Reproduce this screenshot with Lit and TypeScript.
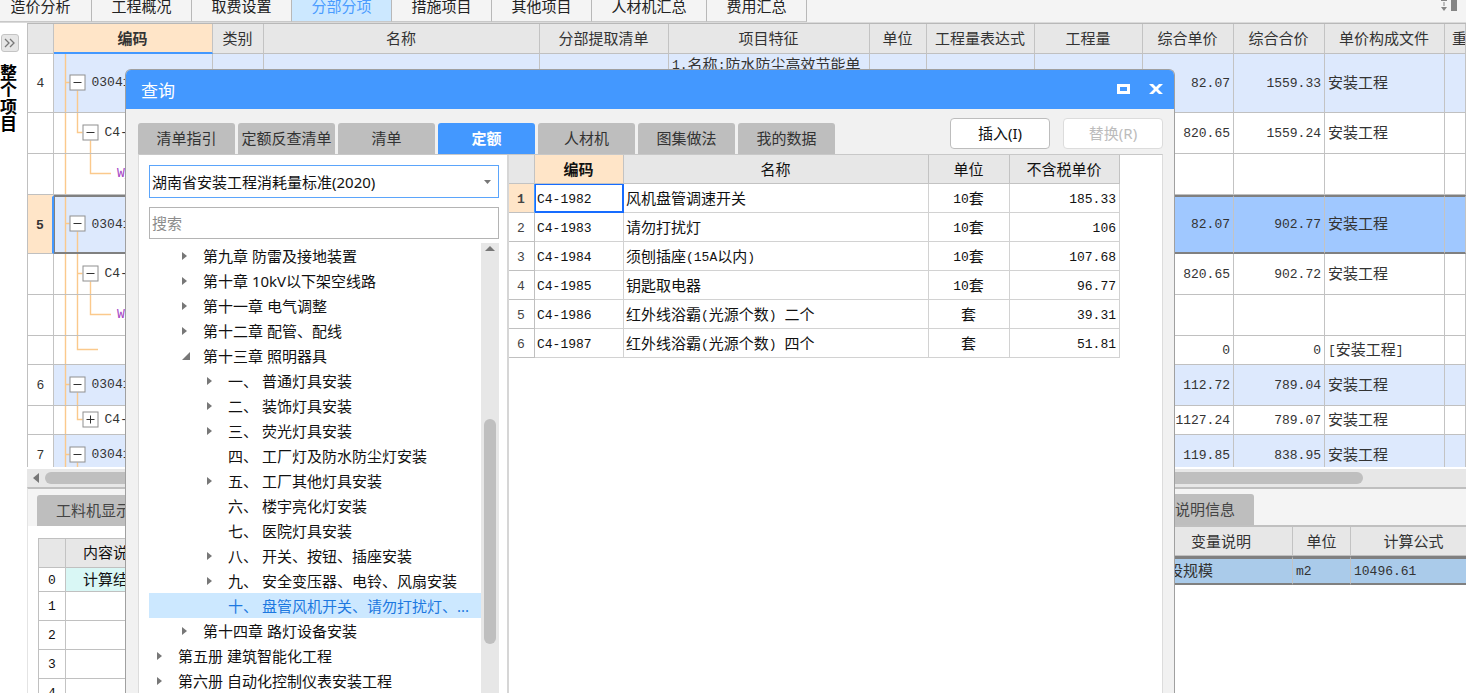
import { LitElement, html, css, svg, nothing } from "lit";
import { customElement } from "lit/decorators.js";
import { classMap } from "lit/directives/class-map.js";

/** Wraps half-width runs so that they keep the fixed pitch used in the grids. */
const mixed = (text: string) =>
  text
    .split(/([\x20-\x7e]+)/)
    .filter((part) => part)
    .map((part) => (/^[\x20-\x7e]/.test(part) ? html`<span class="half">${part}</span>` : part));

const shared = css`
  * {
    box-sizing: border-box;
  }
  button,
  input,
  select {
    font: inherit;
    color: inherit;
    margin: 0;
    padding: 0;
    border: 0;
    background: none;
    outline: none;
  }
  table {
    border-collapse: separate;
    border-spacing: 0;
    table-layout: fixed;
    font-family: "Noto Sans CJK SC", sans-serif;
    font-size: 15px;
    line-height: 20px;
    color: #333;
  }
  th,
  td {
    padding: 0 3px 2px;
    font-weight: 400;
    text-align: left;
    white-space: nowrap;
    overflow: hidden;
    border-right: 1px solid #c3c3c3;
    border-bottom: 1px solid #c0c0c0;
  }
  thead th {
    background: #e7e7e7;
    text-align: center;
    padding: 0 0 1px;
  }
  .half {
    font-family: "Liberation Mono", monospace;
    font-size: 13px;
    line-height: 16px;
    vertical-align: 1px;
    white-space: pre;
  }
  .num {
    text-align: right;
  }
  .mid {
    text-align: center;
  }
  th.active {
    background: #ffe5c8;
    font-weight: 700;
  }
`;

type Node = { level: number; box?: "-" | "+"; pass?: boolean; down?: boolean; tail?: boolean };
type Row = {
  n?: string;
  h: number;
  node: Node;
  code: string;
  feature?: string;
  price?: string;
  total?: string;
  file?: string;
  selected?: boolean;
};

const ROWS: Row[] = [
  { n: "4", h: 59, node: { level: 0, box: "-", down: true }, code: "030412", feature: "1.名称:防水防尘高效节能单", price: "82.07", total: "1559.33", file: "安装工程" },
  { h: 41, node: { level: 1, box: "-", down: true }, code: "C4-1", price: "820.65", total: "1559.24", file: "安装工程" },
  { h: 41, node: { level: 2 }, code: "W_" },
  { n: "5", h: 59, node: { level: 0, box: "-", down: true }, code: "030412", price: "82.07", total: "902.77", file: "安装工程", selected: true },
  { h: 41, node: { level: 1, box: "-", down: true, pass: true }, code: "C4-1", price: "820.65", total: "902.72", file: "安装工程" },
  { h: 41, node: { level: 2, pass: true }, code: "W_" },
  { h: 29, node: { level: 1, tail: true }, code: "", price: "0", total: "0", file: "[安装工程]" },
  { n: "6", h: 41, node: { level: 0, box: "-", down: true }, code: "030412", price: "112.72", total: "789.04", file: "安装工程" },
  { h: 29, node: { level: 1, box: "+" }, code: "C4-1", price: "1127.24", total: "789.07", file: "安装工程" },
  { n: "7", h: 41, node: { level: 0, box: "-", down: true }, code: "030412", price: "119.85", total: "838.95", file: "安装工程" },
];

@customElement("bill-grid")
class BillGrid extends LitElement {
  static styles = [
    shared,
    css`
      :host {
        display: block;
        overflow: hidden;
        border-top: 1px solid #b8b8b8;
        border-left: 1px solid #c0c0c0;
      }
      table {
        width: 100%;
      }
      .c-n { width: 26px; }
      .c-code { width: 159px; }
      .c-kind { width: 51px; }
      .c-pick { width: 129px; }
      .c-feature { width: 201px; }
      .c-unit { width: 57px; }
      .c-qty { width: 108px; }
      .c-price { width: 91px; }
      .c-file { width: 120px; }
      .c-last { width: 21px; }
      thead th {
        height: 30px;
        padding: 0 1px 2px 0;
      }
      thead th:last-child {
        padding-left: 7px;
        text-align: left;
      }
      th.active {
        padding-bottom: 0;
        border-bottom: 2px solid #4398ff;
      }
      td {
        padding-bottom: 3px;
      }
      .parent td {
        background: #dde9fd;
      }
      .no {
        text-align: center;
        padding: 0 0 3px;
      }
      .code {
        padding: 0;
      }
      .cell {
        display: flex;
        align-items: center;
        gap: 6px;
      }
      .twig {
        display: block;
        flex: none;
      }
      .twig svg,
      .cell > svg {
        display: block;
        flex: none;
      }
      .text {
        vertical-align: top;
      }
      .purple {
        color: #a33fc4;
      }
      .selected td {
        background: #a0c8ff;
      }
      .selected td,
      .selected th {
        border-top: 2px solid #808080;
        border-bottom: 2px solid #808080;
      }
      .selected .no {
        background: #ffe5c8;
        font-weight: 700;
        border-top-color: #ffe5c8;
        border-bottom: 1px solid #c0c0c0;
        border-right: 2px solid #4398ff;
      }
      .selected .code {
        background: #dde9fd;
        border-left: 1px solid #808080;
      }
    `,
  ];

  private twig(row: Row) {
    const h = row.h - (row.selected ? 4 : 1);
    const { level, box, pass, down, tail } = row.node;
    const m = Math.floor(h / 2) - 0.5;
    const shift = row.selected ? -1 : 0;
    const x = [11.5, 23.5, 36.5][level] + shift;
    const centre = x + 12 + (level === 0 ? 0 : 1);
    const end = box ? centre - 8 : level === 2 ? 57 : 44;
    const width = box ? centre + 8 : end;
    const lines = [`M${11.5 + shift} 0V${h}`];
    if (level === 0) lines.push(`M${x} ${m}H${end}`);
    else lines.push(`M${x} 0V${m}H${end}`);
    if (pass) lines.push(`M23.5 0V${h}`);
    if (down) lines.push(`M${centre} ${m + 8}V${h}`);
    if (tail) lines.push(`M23.5 0V${m}`);
    const art = html`<svg width=${width} height=${h} viewBox="0 0 ${width} ${h}" fill="none">
      <path d=${lines.join("")} stroke="#fbc98c" stroke-width="1.4" />
      ${box
        ? svg`<rect x=${centre - 7.5} y=${m - 7.5} width="15" height="15" fill="#fff" stroke="#909090" />
          <path d=${`M${centre - 4} ${m}h8${box === "+" ? `M${centre} ${m - 4}v8` : ""}`} stroke="#333" />`
        : nothing}
    </svg>`;
    return box
      ? html`<button class="twig" aria-label=${box === "+" ? "展开" : "折叠"}>${art}</button>`
      : art;
  }

  render() {
    return html`<table>
      <colgroup>
        <col class="c-n" /><col class="c-code" /><col class="c-kind" /><col /><col class="c-pick" />
        <col class="c-feature" /><col class="c-unit" /><col class="c-qty" /><col class="c-qty" />
        <col class="c-price" /><col class="c-price" /><col class="c-file" /><col class="c-last" />
      </colgroup>
      <thead>
        <tr>
          <th></th>
          <th class="active">编码</th>
          ${["类别", "名称", "分部提取清单", "项目特征", "单位", "工程量表达式", "工程量", "综合单价", "综合合价", "单价构成文件", "重"].map(
            (t) => html`<th>${t}</th>`,
          )}
        </tr>
      </thead>
      <tbody>
        ${ROWS.map(
          (r) => html`<tr class=${classMap({ parent: !!r.n, selected: !!r.selected })}>
            <th class="no"><span class="half">${r.n ?? ""}</span></th>
            <td class="code">
              <div class="cell">
                ${this.twig(r)}<span class=${classMap({ half: true, purple: r.node.level === 2 })}>${r.code}</span>
              </div>
            </td>
            <td></td>
            <td></td>
            <td></td>
            <td class="text">${mixed(r.feature ?? "")}</td>
            <td></td>
            <td></td>
            <td></td>
            <td class="num"><span class="half">${r.price ?? ""}</span></td>
            <td class="num"><span class="half">${r.total ?? ""}</span></td>
            <td>${mixed(r.file ?? "")}</td>
            <td></td>
          </tr>`,
        )}
      </tbody>
    </table>`;
  }
}

type Item = { level: 0 | 1 | 2; text: string; mark?: "closed" | "open"; chosen?: boolean };

const TREE: Item[] = [
  { level: 1, mark: "closed", text: "第九章 防雷及接地装置" },
  { level: 1, mark: "closed", text: "第十章 10kV以下架空线路" },
  { level: 1, mark: "closed", text: "第十一章 电气调整" },
  { level: 1, mark: "closed", text: "第十二章 配管、配线" },
  { level: 1, mark: "open", text: "第十三章 照明器具" },
  { level: 2, mark: "closed", text: "一、 普通灯具安装" },
  { level: 2, mark: "closed", text: "二、 装饰灯具安装" },
  { level: 2, mark: "closed", text: "三、 荧光灯具安装" },
  { level: 2, text: "四、 工厂灯及防水防尘灯安装" },
  { level: 2, mark: "closed", text: "五、 工厂其他灯具安装" },
  { level: 2, text: "六、 楼宇亮化灯安装" },
  { level: 2, text: "七、 医院灯具安装" },
  { level: 2, mark: "closed", text: "八、 开关、按钮、插座安装" },
  { level: 2, mark: "closed", text: "九、 安全变压器、电铃、风扇安装" },
  { level: 2, text: "十、 盘管风机开关、请勿打扰灯、...", chosen: true },
  { level: 1, mark: "closed", text: "第十四章 路灯设备安装" },
  { level: 0, mark: "closed", text: "第五册 建筑智能化工程" },
  { level: 0, mark: "closed", text: "第六册 自动化控制仪表安装工程" },
];

const QUOTAS = [
  ["C4-1982", "风机盘管调速开关", "10套", "185.33"],
  ["C4-1983", "请勿打扰灯", "10套", "106"],
  ["C4-1984", "须刨插座(15A以内)", "10套", "107.68"],
  ["C4-1985", "钥匙取电器", "10套", "96.77"],
  ["C4-1986", "红外线浴霸(光源个数) 二个", "套", "39.31"],
  ["C4-1987", "红外线浴霸(光源个数) 四个", "套", "51.81"],
];

@customElement("query-dialog")
class QueryDialog extends LitElement {
  static styles = [
    shared,
    css`
      :host {
        display: flex;
        flex-direction: column;
        background: #f1f1f1;
        border: 1px solid #a0a0a0;
        border-bottom: 0;
        border-radius: 6px 6px 0 0;
        overflow: hidden;
        color: #111;
        font-family: "Noto Sans", "Noto Sans CJK SC", sans-serif;
      }
      .title {
        display: flex;
        align-items: center;
        height: 39px;
        padding: 0 11px 1px 15px;
        background: #4398ff;
        color: #fff;
      }
      .title h2 {
        flex: 1;
        margin: 0;
        padding-top: 4px;
        font-size: 17px;
        line-height: 24px;
        font-weight: 400;
      }
      .title button {
        display: block;
        width: 14px;
        height: 10px;
        margin-left: 18px;
      }
      .title svg {
        display: block;
      }
      .bar {
        display: flex;
        justify-content: space-between;
        padding: 9px 11px 0 12px;
        height: 45px;
      }
      .tabs {
        display: flex;
        align-items: flex-end;
        gap: 3px;
      }
      .tabs button {
        width: 97px;
        height: 31px;
        padding-bottom: 1px;
        background: #bebebe;
        border-radius: 3px 3px 0 0;
        color: #333;
        white-space: nowrap;
      }
      .tabs .on {
        background: #4398ff;
        color: #fff;
        font-weight: 700;
      }
      .actions {
        display: flex;
        gap: 13px;
      }
      .actions button {
        width: 100px;
        height: 31px;
        padding-bottom: 1px;
        border: 1px solid #bdbdbd;
        border-radius: 4px;
        background: #fff;
      }
      .actions button:disabled {
        border-color: #dcdcdc;
        color: #bcbcbc;
      }
      .body {
        flex: 1;
        min-height: 0;
        display: flex;
        margin: 0 11px 0 12px;
        background: #fff;
        border: 1px solid #dcdcdc;
        border-top-color: #c8c8c8;
        border-bottom: 0;
      }
      .left {
        width: 370px;
        flex: none;
        display: flex;
        flex-direction: column;
        padding: 10px 8px 0 10px;
        border-right: 2px solid #d6d6d6;
      }
      .combo {
        display: flex;
        align-items: center;
        height: 33px;
        padding-right: 7px;
        border: 1px solid #5ba5fb;
      }
      .combo select {
        appearance: none;
        flex: 1;
        padding-left: 2px;
      }
      .search {
        height: 32px;
        margin-top: 9px;
        padding-left: 2px;
        border: 1px solid #b4b4b4;
        border-radius: 0;
      }
      .search::placeholder {
        color: #8c8c8c;
      }
      .scroll {
        flex: 1;
        min-height: 0;
        margin-top: 4px;
        display: flex;
      }
      ul {
        flex: 1;
        margin: 0;
        padding: 0;
        list-style: none;
        overflow: hidden;
      }
      li {
        display: flex;
        align-items: center;
        gap: 13px;
        height: 25px;
        padding-left: 8px;
        line-height: 20px;
        white-space: nowrap;
      }
      .l1 {
        padding-left: 33px;
      }
      .l2 {
        padding-left: 58px;
      }
      .chosen {
        background: #cce8ff;
        color: #1d78e0;
      }
      .track {
        width: 18px;
        background: #e7e7e7;
        display: flex;
        flex-direction: column;
        align-items: center;
        padding-top: 3px;
      }
      .thumb {
        width: 12px;
        height: 225px;
        margin-top: 168px;
        border-radius: 6px;
        background: #bfbfbf;
      }
      .right {
        flex: 1;
        min-width: 0;
        padding-right: 42px;
      }
      .quota {
        width: 100%;
        color: #111;
      }
      .quota th,
      .quota td {
        height: 29px;
        padding: 0 3px 1px 2px;
        border-color: #d2d2d2;
      }
      .quota thead th {
        padding-bottom: 0;
        border-color: #c3c3c3;
      }
      .quota .no {
        padding-bottom: 0;
        text-align: center;
        border-color: #c0c0c0;
        color: #444;
      }
      .quota .current {
        background: #ffe5c8;
        font-weight: 700;
        border-right: 1px solid #4398ff;
      }
      .quota .focus {
        padding: 0 0 0 1px;
        border: 2px solid #176cff;
        border-width: 1px 2px 2px 1px;
      }
      .q-n { width: 26px; }
      .q-code { width: 89px; }
      .q-unit { width: 81px; }
      .q-price { width: 110px; }
    `,
  ];

  render() {
    return html`
      <header class="title">
        <h2>查询</h2>
        <button aria-label="最大化">
          <svg width="14" height="10" viewBox="0 0 14 10"><path d="M0 0h13v10H0zM3 3v4h7V3z" fill="#fff" fill-rule="evenodd" /></svg>
        </button>
        <button aria-label="关闭">
          <svg width="14" height="10" viewBox="0 0 14 10"><path d="M0 0h4l3 3 3-3h4L9 5l5 5h-4L7 7l-3 3H0l5-5z" fill="#fff" /></svg>
        </button>
      </header>
      <div class="bar">
        <nav class="tabs">
          ${["清单指引", "定额反查清单", "清单", "定额", "人材机", "图集做法", "我的数据"].map(
            (t) => html`<button class=${classMap({ on: t === "定额" })}>${t}</button>`,
          )}
        </nav>
        <div class="actions"><button>插入(I)</button><button disabled>替换(R)</button></div>
      </div>
      <div class="body">
        <section class="left">
          <div class="combo">
            <select aria-label="定额库"><option>湖南省安装工程消耗量标准(2020)</option></select>
            <svg width="7" height="4" viewBox="0 0 7 4"><path d="M0 0h7L3.500 4z" fill="#777" /></svg>
          </div>
          <input class="search" type="text" placeholder="搜索" aria-label="搜索" />
          <div class="scroll">
            <ul>
              ${TREE.map(
                (i) => html`<li class=${classMap({ l1: i.level === 1, l2: i.level === 2, chosen: !!i.chosen })}>
                  <svg width="8" height="10" viewBox="0 0 8 10">
                    ${i.mark === "closed"
                      ? svg`<path d="M0 1v8l5-4z" fill="#777" />`
                      : i.mark === "open"
                        ? svg`<path d="M8 1v8H0z" fill="#777" />`
                        : nothing}
                  </svg>
                  <span>${i.text}</span>
                </li>`,
              )}
            </ul>
            <div class="track">
              <svg width="10" height="5" viewBox="0 0 10 5"><path d="M0 5h10L5 0z" fill="#777" /></svg>
              <div class="thumb"></div>
            </div>
          </div>
        </section>
        <section class="right">
          <table class="quota">
            <colgroup><col class="q-n" /><col class="q-code" /><col /><col class="q-unit" /><col class="q-price" /></colgroup>
            <thead>
              <tr><th></th><th class="active">编码</th><th>名称</th><th>单位</th><th>不含税单价</th></tr>
            </thead>
            <tbody>
              ${QUOTAS.map(
                ([code, name, unit, price], k) => html`<tr>
                  <th class=${classMap({ no: true, current: k === 0 })}><span class="half">${k + 1}</span></th>
                  <td class=${classMap({ focus: k === 0 })}><span class="half">${code}</span></td>
                  <td>${mixed(name)}</td>
                  <td class="mid">${mixed(unit)}</td>
                  <td class="num"><span class="half">${price}</span></td>
                </tr>`,
              )}
            </tbody>
          </table>
        </section>
      </div>
    `;
  }
}

@customElement("app-root")
class AppRoot extends LitElement {
  static styles = [
    shared,
    css`
      :host {
        display: flex;
        flex-direction: column;
        position: relative;
        height: 100vh;
        overflow: hidden;
        background: #fff;
        color: #222;
        font-family: "Noto Sans CJK SC", sans-serif;
        font-size: 15px;
        line-height: 20px;
      }
      .top {
        display: flex;
        height: 23px;
        flex: none;
        background: #f4f4f4;
        border-bottom: 1px solid #dadada;
      }
      .top button {
        width: 100px;
        flex: none;
        padding-bottom: 9px;
        line-height: 12px;
        border-right: 1px solid #b8b8b8;
        border-bottom: 1px solid #c8c8c8;
      }
      .top .first {
        width: 92px;
        padding-right: 10px;
      }
      .top .wide {
        width: 115px;
      }
      .top .on {
        background: #cce8ff;
        color: #4a9cff;
      }
      .top svg {
        margin: 0 8px 0 auto;
      }
      .main {
        flex: 1;
        min-height: 0;
        display: flex;
      }
      .side {
        width: 27px;
        flex: none;
        padding-top: 11px;
      }
      .side button {
        display: block;
        width: 18px;
        height: 18px;
        margin: 0 0 12px 1px;
        border: 1px solid #c4c4c4;
        border-radius: 3px;
        background: #e6e6e6;
      }
      .side svg {
        display: block;
        margin: auto;
      }
      .side span {
        display: block;
        width: 17px;
        writing-mode: vertical-rl;
        text-orientation: upright;
        font-size: 17px;
        font-weight: 700;
        line-height: 17px;
        color: #000;
      }
      .work {
        flex: 1;
        min-width: 0;
        display: flex;
        flex-direction: column;
      }
      bill-grid {
        flex: 1;
        min-height: 0;
      }
      .hscroll {
        flex: none;
        display: flex;
        align-items: center;
        gap: 4px;
        height: 18px;
        margin-top: 2px;
        padding: 0 103px 0 6px;
        background: #e7e7e7;
      }
      .hthumb {
        flex: 1;
        height: 12px;
        border-radius: 6px;
        background: #bfbfbf;
      }
      .bottom {
        flex: none;
        height: 206px;
        display: flex;
        border-top: 2px solid #bfbfbf;
        border-left: 1px solid #e4e4e4;
      }
      .pane {
        flex: 1;
        min-width: 0;
      }
      .pane.info {
        flex: none;
        width: 316px;
      }
      .strip {
        height: 37px;
        display: flex;
        align-items: flex-end;
        padding-left: 9px;
        background: #f4f4f4;
      }
      .strip button {
        height: 31px;
        padding: 0 19px 1px;
        border-radius: 3px 3px 0 0;
        background: #bebebe;
        color: #444;
      }
      .info .strip {
        height: 38px;
        padding-left: 6px;
        border-bottom: 2px solid #c0c0c0;
      }
      .lines {
        width: 123px;
        margin: 12px 0 0 10px;
        border-top: 1px solid #c0c0c0;
        border-left: 1px solid #c0c0c0;
        color: #111;
      }
      .lines th,
      .lines td {
        height: 29px;
        text-align: center;
        padding: 0 0 2px;
      }
      .lines .sum th,
      .lines .sum td {
        height: 24px;
      }
      .lines .sum td {
        background: #d9f7f5;
      }
      .l-n { width: 27px; }
      .vars {
        width: 327px;
      }
      .vars thead th {
        height: 29px;
        padding: 0;
      }
      .vars td {
        height: 29px;
        padding-bottom: 3px;
        background: #aacbea;
        border-top: 3px solid #808080;
        border-bottom: 2px solid #808080;
      }
      .v-name { width: 143px; }
      .v-unit { width: 58px; }
      query-dialog {
        position: absolute;
        top: 69px;
        bottom: 0;
        left: 125px;
        right: 291px;
      }
    `,
  ];

  render() {
    const tabs = ["造价分析", "工程概况", "取费设置", "分部分项", "措施项目", "其他项目", "人材机汇总", "费用汇总"];
    return html`
      <nav class="top">
        ${tabs.map(
          (t, k) => html`<button class=${classMap({ first: k === 0, on: k === 3, wide: k === 6 })}>${t}</button>`,
        )}
        <svg width="17" height="12" viewBox="0 0 17 12">
          <path d="M0 0h6v1H0zM0 7h6l-3 4zM2.500 2h1v4h-1zM10 0h6v11h-6z" fill="#858585" />
        </svg>
      </nav>
      <div class="main">
        <aside class="side">
          <button aria-label="展开项目">
            <svg width="12" height="10" viewBox="0 0 12 10"><path d="M1 1l4 4-4 4M6 1l4 4-4 4" fill="none" stroke="#777" stroke-width="1.3" /></svg>
          </button>
          <span>整个项目</span>
        </aside>
        <div class="work">
          <bill-grid></bill-grid>
          <div class="hscroll">
            <svg width="8" height="10" viewBox="0 0 8 10"><path d="M6 0v10L0 5z" fill="#777" /></svg>
            <div class="hthumb"></div>
          </div>
          <div class="bottom">
            <section class="pane">
              <div class="strip"><button>工料机显示</button></div>
              <table class="lines">
                <colgroup><col class="l-n" /><col /></colgroup>
                <thead><tr><th></th><th>内容说明</th></tr></thead>
                <tbody>
                  ${["计算结果", "", "", "", ""].map(
                    (t, k) => html`<tr class=${classMap({ sum: k === 0 })}>
                      <th><span class="half">${k}</span></th>
                      <td>${t}</td>
                    </tr>`,
                  )}
                </tbody>
              </table>
            </section>
            <section class="pane info">
              <div class="strip"><button>说明信息</button></div>
              <table class="vars">
                <colgroup><col class="v-name" /><col class="v-unit" /><col /></colgroup>
                <thead><tr><th>变量说明</th><th>单位</th><th>计算公式</th></tr></thead>
                <tbody>
                  <tr><td>建设规模</td><td><span class="half">m2</span></td><td><span class="half">10496.61</span></td></tr>
                </tbody>
              </table>
            </section>
          </div>
        </div>
      </div>
      <query-dialog role="dialog" aria-label="查询"></query-dialog>
    `;
  }
}
